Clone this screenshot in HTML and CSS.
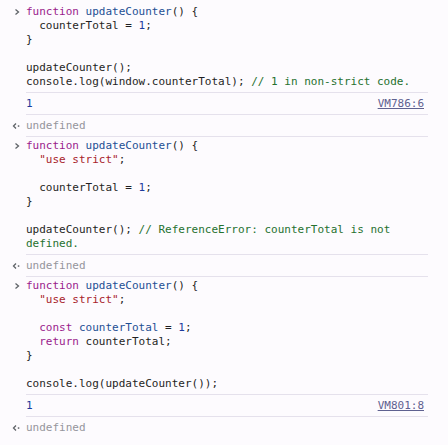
FILE: index.html
```html
<!DOCTYPE html>
<html>
<head>
<meta charset="utf-8">
<link rel="stylesheet" href="styles.css">
</head>
<body>
<div class="console">
  <div class="row input first">
    <div class="gutter"><svg class="ico" width="8" height="8" viewBox="0 0 8 8"><path d="M2.5 1.5 L5.5 4 L2.5 6.5" fill="none" stroke="#5f6368" stroke-width="1.3"/></svg></div>
    <div class="msg"><pre class="code"><span class="kw">function</span> <span class="def">updateCounter</span>() {
  counterTotal = <span class="num">1</span>;
}

updateCounter();
console.log(window.counterTotal); <span class="cm">// 1 in non-strict code.</span></pre></div>
  </div>
  <div class="row output">
    <div class="gutter"></div>
    <div class="msg"><pre class="code"><span class="num">1</span></pre><span class="link">VM786:6</span></div>
  </div>
  <div class="row output">
    <div class="gutter"><svg class="ico" width="9" height="8" viewBox="0 0 9 8"><path d="M4 1.5 L1.5 4 L4 6.5" fill="none" stroke="#5f6368" stroke-width="1.3"/><rect x="5.8" y="3.3" width="1.5" height="1.5" fill="#5f6368"/></svg></div>
    <div class="msg"><pre class="code undef">undefined</pre></div>
  </div>
  <div class="row input">
    <div class="gutter"><svg class="ico" width="8" height="8" viewBox="0 0 8 8"><path d="M2.5 1.5 L5.5 4 L2.5 6.5" fill="none" stroke="#5f6368" stroke-width="1.3"/></svg></div>
    <div class="msg"><pre class="code"><span class="kw">function</span> <span class="def">updateCounter</span>() {
  <span class="str">"use strict"</span>;

  counterTotal = <span class="num">1</span>;
}

updateCounter(); <span class="cm">// ReferenceError: counterTotal is not defined.</span></pre></div>
  </div>
  <div class="row output">
    <div class="gutter"><svg class="ico" width="9" height="8" viewBox="0 0 9 8"><path d="M4 1.5 L1.5 4 L4 6.5" fill="none" stroke="#5f6368" stroke-width="1.3"/><rect x="5.8" y="3.3" width="1.5" height="1.5" fill="#5f6368"/></svg></div>
    <div class="msg"><pre class="code undef">undefined</pre></div>
  </div>
  <div class="row input">
    <div class="gutter"><svg class="ico" width="8" height="8" viewBox="0 0 8 8"><path d="M2.5 1.5 L5.5 4 L2.5 6.5" fill="none" stroke="#5f6368" stroke-width="1.3"/></svg></div>
    <div class="msg"><pre class="code"><span class="kw">function</span> <span class="def">updateCounter</span>() {
  <span class="str">"use strict"</span>;

  <span class="kw">const</span> <span class="def">counterTotal</span> = <span class="num">1</span>;
  <span class="kw">return</span> counterTotal;
}

console.log(updateCounter());</pre></div>
  </div>
  <div class="row output">
    <div class="gutter"></div>
    <div class="msg"><pre class="code"><span class="num">1</span></pre><span class="link">VM801:8</span></div>
  </div>
  <div class="row output last">
    <div class="gutter"><svg class="ico" width="9" height="8" viewBox="0 0 9 8"><path d="M4 1.5 L1.5 4 L4 6.5" fill="none" stroke="#5f6368" stroke-width="1.3"/><rect x="5.8" y="3.3" width="1.5" height="1.5" fill="#5f6368"/></svg></div>
    <div class="msg"><pre class="code undef">undefined</pre></div>
  </div>
</div>
</body>
</html>
```
FILE: styles.css
```css
html, body {
  margin: 0;
  padding: 0;
  background: #fdfbfe;
}
body {
  padding-top: 3px;
  font-family: "DejaVu Sans Mono", "Liberation Mono", monospace;
  font-size: 11px;
  line-height: 14px;
  color: #1f1f24;
}
.console {
  width: 428px;
}
.row {
  display: flex;
}
.gutter {
  width: 26px;
  flex: none;
  position: relative;
}
.ico {
  position: absolute;
  left: 12px;
}
.input .ico {
  left: 13px;
  top: 5px;
}
.output .ico {
  top: 7px;
}
.msg {
  flex: 1;
  min-width: 0;
  display: flex;
  justify-content: space-between;
  border-bottom: 1px solid #e5e1ec;
}
.row.last .msg {
  border-bottom-color: transparent;
}
.input .msg {
  padding: 2px 4px 3px 0;
}
.output .msg {
  padding: 4px 4px 3px 0;
}
.code {
  margin: 0;
  font: inherit;
  white-space: pre-wrap;
  flex: 1;
  min-width: 0;
}
.kw { color: #9a1c8c; }
.def { color: #1e4f94; }
.num { color: #1c3a9c; }
.str { color: #a8232b; }
.cm { color: #26712f; }
.undef { color: #95959c; }
.link {
  color: #5f6190;
  text-decoration: underline;
  flex: none;
}
```
